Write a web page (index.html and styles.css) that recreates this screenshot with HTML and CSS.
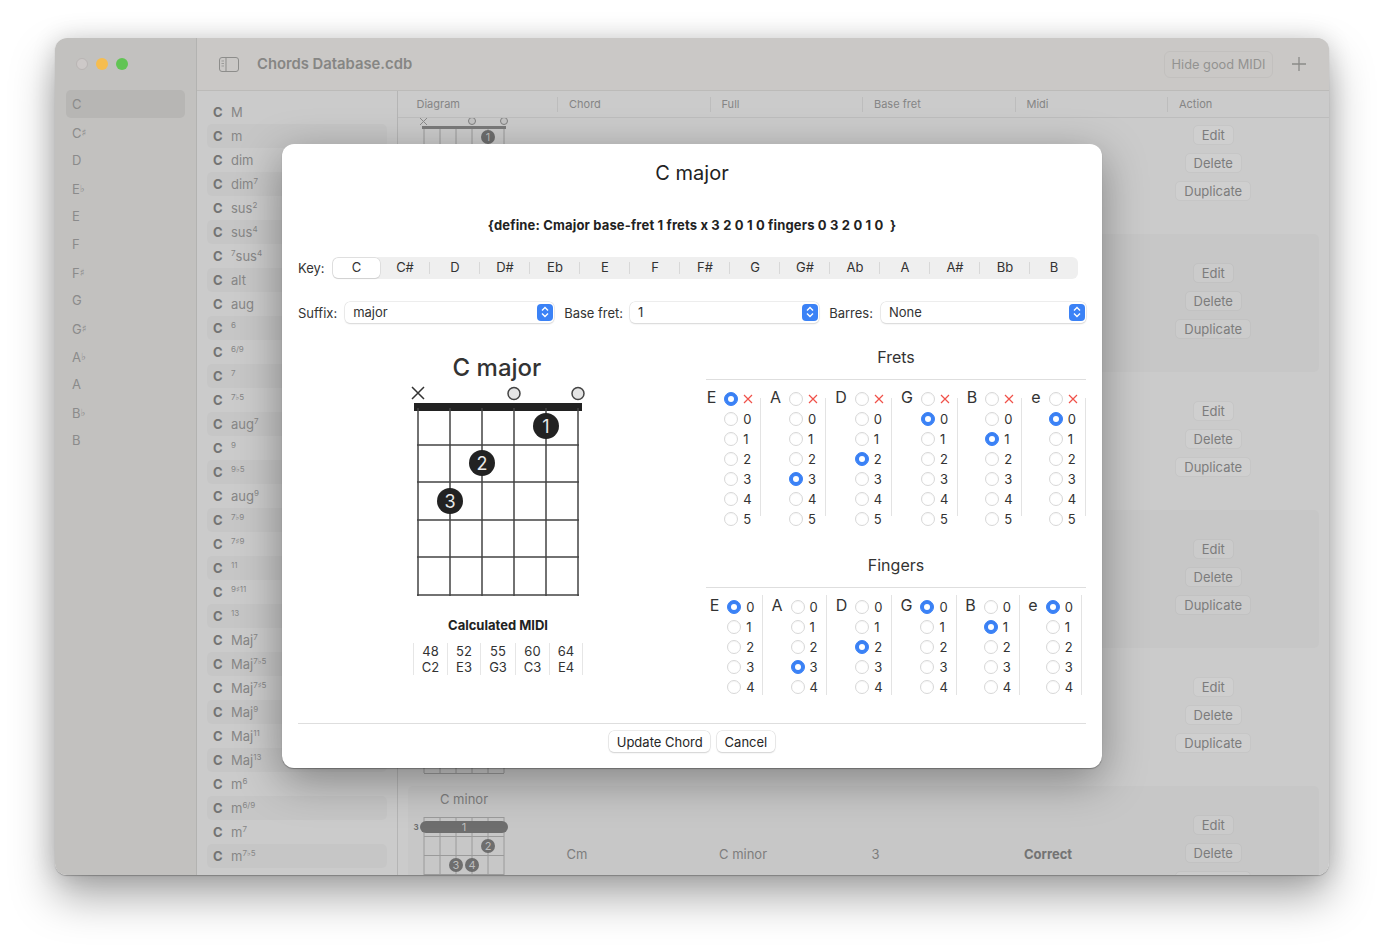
FILE: index.html
```html
<!DOCTYPE html>
<html lang="en">
<head>
    <meta charset="UTF-8">
    <meta name="viewport" content="width=device-width, initial-scale=1.0">
    <title>Chords Database.cdb</title>
    <link rel="stylesheet" href="styles.css">
</head>
<body>
    <div class="window">
        <div class="sidebar">
            <div class="lights"><span class="light grey"></span><span class="light yellow"></span><span class="light green"></span></div>
            <ul class="keys">
                <li class="active">C</li>
                <li>C<small>♯</small></li>
                <li>D</li>
                <li>E<small>♭</small></li>
                <li>E</li>
                <li>F</li>
                <li>F<small>♯</small></li>
                <li>G</li>
                <li>G<small>♯</small></li>
                <li>A<small>♭</small></li>
                <li>A</li>
                <li>B<small>♭</small></li>
                <li>B</li>
            </ul>
        </div>

        <div class="main">
            <div class="toolbar">
                <svg class="sidebar-icon" width="20" height="15" viewBox="0 0 20 15"><rect x="0.5" y="0.5" width="19" height="14" rx="2.5" fill="none" stroke="#8d8d8b"/><path d="M7 1v13" stroke="#8d8d8b"/><path d="M2.5 4h2.5M2.5 6.5h2.5M2.5 9h2.5" stroke="#9b9b99"/></svg>
                <h1>Chords Database.cdb</h1>
                <button class="hide-good">Hide good MIDI</button>
                <svg class="plus" width="14" height="14" viewBox="0 0 14 14"><path d="M7 0v14M0 7h14" stroke="#8a8a88" stroke-width="1.3"/></svg>
            </div>
            <div class="content">
                <ul class="suffixes">
                    <li><b>C</b>M</li>
                    <li><b>C</b>m</li>
                    <li><b>C</b>dim</li>
                    <li><b>C</b>dim<sup>7</sup></li>
                    <li><b>C</b>sus<sup>2</sup></li>
                    <li><b>C</b>sus<sup>4</sup></li>
                    <li><b>C</b><sup>7</sup>sus<sup>4</sup></li>
                    <li><b>C</b>alt</li>
                    <li><b>C</b>aug</li>
                    <li><b>C</b><sup>6</sup></li>
                    <li><b>C</b><sup>6/9</sup></li>
                    <li><b>C</b><sup>7</sup></li>
                    <li><b>C</b><sup>7♭5</sup></li>
                    <li><b>C</b>aug<sup>7</sup></li>
                    <li><b>C</b><sup>9</sup></li>
                    <li><b>C</b><sup>9♭5</sup></li>
                    <li><b>C</b>aug<sup>9</sup></li>
                    <li><b>C</b><sup>7♭9</sup></li>
                    <li><b>C</b><sup>7♯9</sup></li>
                    <li><b>C</b><sup>11</sup></li>
                    <li><b>C</b><sup>9♯11</sup></li>
                    <li><b>C</b><sup>13</sup></li>
                    <li><b>C</b>Maj<sup>7</sup></li>
                    <li><b>C</b>Maj<sup>7♭5</sup></li>
                    <li><b>C</b>Maj<sup>7♯5</sup></li>
                    <li><b>C</b>Maj<sup>9</sup></li>
                    <li><b>C</b>Maj<sup>11</sup></li>
                    <li><b>C</b>Maj<sup>13</sup></li>
                    <li><b>C</b>m<sup>6</sup></li>
                    <li><b>C</b>m<sup>6/9</sup></li>
                    <li><b>C</b>m<sup>7</sup></li>
                    <li><b>C</b>m<sup>7♭5</sup></li>
                </ul>

                <div class="table">
                    <div class="table-head">
                        <span>Diagram</span><span>Chord</span><span>Full</span><span>Base fret</span><span>Midi</span><span>Action</span>
                    </div>
                    <div class="table-rows">
                        <div class="row">
                            <div class="cell-diagram">
                                <svg width="152" height="138" viewBox="0 0 152 138">
                                    <path d="M12 22l7 7M19 22l-7 7" stroke="#8a8a8a"/>
                                    <circle cx="64" cy="25" r="3.5" fill="#c4c4c4" stroke="#7f7f7f"/>
                                    <circle cx="96" cy="25" r="3.5" fill="#c4c4c4" stroke="#7f7f7f"/>
                                    <rect x="14" y="30" width="84" height="3" fill="#7a7a7a"/>
                                    <path d="M16 33v105M32 33v105M48 33v105M64 33v105M80 33v105M96 33v105" stroke="#9a9a9a"/>
                                    <circle cx="80" cy="41" r="7" fill="#6e6e6e"/>
                                    <text x="80" y="45" text-anchor="middle" class="mini-dot">1</text>
                                </svg>
                            </div>
                            <div></div><div></div><div></div><div></div>
                            <div class="cell-action"><button>Edit</button><button>Delete</button><button>Duplicate</button></div>
                        </div>
                        <div class="row band">
                            <div></div><div></div><div></div><div></div><div></div>
                            <div class="cell-action"><button>Edit</button><button>Delete</button><button>Duplicate</button></div>
                        </div>
                        <div class="row">
                            <div></div><div></div><div></div><div></div><div></div>
                            <div class="cell-action"><button>Edit</button><button>Delete</button><button>Duplicate</button></div>
                        </div>
                        <div class="row band">
                            <div></div><div></div><div></div><div></div><div></div>
                            <div class="cell-action"><button>Edit</button><button>Delete</button><button>Duplicate</button></div>
                        </div>
                        <div class="row">
                            <div class="cell-diagram">
                                <svg width="152" height="138" viewBox="0 0 152 138">
                                    <path d="M16 100v25M32 100v25M48 100v25M64 100v25M80 100v25M96 100v25" stroke="#9a9a9a"/>
                                    <path d="M16 125.500h80M16 118.500h80" stroke="#9a9a9a"/>
                                </svg>
                            </div>
                            <div></div><div></div><div></div><div></div>
                            <div class="cell-action"><button>Edit</button><button>Delete</button><button>Duplicate</button></div>
                        </div>
                        <div class="row band">
                            <div class="cell-diagram">
                                <svg width="152" height="138" viewBox="0 0 152 138">
                                    <text x="56" y="18" text-anchor="middle" class="mini-title">C minor</text>
                                    <path d="M16 31v107M32 31v107M48 31v107M64 31v107M80 31v107M96 31v107" stroke="#9a9a9a"/>
                                    <path d="M16 31.500h80M16 50.500h80M16 69.500h80M16 88.500h80" stroke="#9a9a9a"/>
                                    <text x="8" y="44" text-anchor="middle" class="mini-fret">3</text>
                                    <rect x="12" y="35" width="88" height="12" rx="6" fill="#6e6e6e"/>
                                    <text x="56" y="45" text-anchor="middle" class="mini-dot">1</text>
                                    <circle cx="80" cy="60" r="7" fill="#6e6e6e"/>
                                    <text x="80" y="64" text-anchor="middle" class="mini-dot">2</text>
                                    <circle cx="48" cy="79" r="7" fill="#6e6e6e"/>
                                    <text x="48" y="83" text-anchor="middle" class="mini-dot">3</text>
                                    <circle cx="64" cy="79" r="7" fill="#6e6e6e"/>
                                    <text x="64" y="83" text-anchor="middle" class="mini-dot">4</text>
                                </svg>
                            </div>
                            <div class="cell-text">Cm</div>
                            <div class="cell-text">C minor</div>
                            <div class="cell-text">3</div>
                            <div class="cell-text correct">Correct</div>
                            <div class="cell-action"><button>Edit</button><button>Delete</button><button>Duplicate</button></div>
                        </div>
                    </div>
                </div>
            </div>
        </div>

        <div class="sheet">
            <h2 class="sheet-title">C major</h2>
            <p class="define">{define: Cmajor base-fret 1 frets x 3 2 0 1 0 fingers 0 3 2 0 1 0 &nbsp;}</p>

            <div class="key-row">
                <span class="field-label">Key:</span>
                <div class="segments">
                    <span class="segment selected">C</span>
                    <span class="segment">C#</span>
                    <span class="segment">D</span>
                    <span class="segment">D#</span>
                    <span class="segment">Eb</span>
                    <span class="segment">E</span>
                    <span class="segment">F</span>
                    <span class="segment">F#</span>
                    <span class="segment">G</span>
                    <span class="segment">G#</span>
                    <span class="segment">Ab</span>
                    <span class="segment">A</span>
                    <span class="segment">A#</span>
                    <span class="segment">Bb</span>
                    <span class="segment">B</span>
                </div>
            </div>

            <div class="select-row">
                <span class="field-label">Suffix:</span>
                <div class="select suffix-select">major<span class="stepper"><svg width="8" height="12" viewBox="0 0 8 12"><path d="M1 4.500l3-3 3 3M1 7.500l3 3 3-3" fill="none" stroke="#fff" stroke-width="1.400"/></svg></span></div>
                <span class="field-label">Base fret:</span>
                <div class="select fret-select">1<span class="stepper"><svg width="8" height="12" viewBox="0 0 8 12"><path d="M1 4.500l3-3 3 3M1 7.500l3 3 3-3" fill="none" stroke="#fff" stroke-width="1.400"/></svg></span></div>
                <span class="field-label">Barres:</span>
                <div class="select barre-select">None<span class="stepper"><svg width="8" height="12" viewBox="0 0 8 12"><path d="M1 4.500l3-3 3 3M1 7.500l3 3 3-3" fill="none" stroke="#fff" stroke-width="1.400"/></svg></span></div>
            </div>

            <div class="editor">
                <div class="preview">
                    <svg class="chord" width="200" height="260" viewBox="398 347 200 260">
                        <text x="497" y="376" text-anchor="middle" class="chord-title">C major</text>
                        <path d="M412 387l12 12M424 387l-12 12" stroke="#333" stroke-width="1.500"/>
                        <circle cx="514" cy="393.500" r="6" fill="#e4e4e4" stroke="#444" stroke-width="1.500"/>
                        <circle cx="578" cy="393.500" r="6" fill="#e4e4e4" stroke="#444" stroke-width="1.500"/>
                        <rect x="414" y="403" width="168" height="8" fill="#222"/>
                        <path d="M418 408v188M450 408v188M482 408v188M514 408v188M546 408v188M578 408v188" stroke="#444" stroke-width="1.500"/>
                        <path d="M417 445h162M417 482h162M417 520h162M417 557h162M417 595h162" stroke="#444" stroke-width="1.500"/>
                        <circle cx="546" cy="426" r="13" fill="#222"/>
                        <text x="546" y="433" text-anchor="middle" class="chord-dot">1</text>
                        <circle cx="482" cy="463" r="13" fill="#222"/>
                        <text x="482" y="470" text-anchor="middle" class="chord-dot">2</text>
                        <circle cx="450" cy="501" r="13" fill="#222"/>
                        <text x="450" y="508" text-anchor="middle" class="chord-dot">3</text>
                    </svg>
                    <h3 class="midi-title">Calculated MIDI</h3>
                    <div class="midi">
                        <div class="midi-note">48<br>C2</div>
                        <div class="midi-note">52<br>E3</div>
                        <div class="midi-note">55<br>G3</div>
                        <div class="midi-note">60<br>C3</div>
                        <div class="midi-note">64<br>E4</div>
                    </div>
                </div>

                <div class="pickers">
                    <h3 class="picker-title">Frets</h3>
                    <div class="strings frets">
                        <div class="string">
                            <span class="string-name">E</span>
                            <div class="options">
                                <div class="option"><span class="radio on"></span><svg class="mute" width="10" height="10" viewBox="0 0 10 10"><path d="M1 1l8 8M9 1l-8 8" stroke="#f0524a" stroke-width="1.200"/></svg></div>
                                <div class="option"><span class="radio"></span>0</div>
                                <div class="option"><span class="radio"></span>1</div>
                                <div class="option"><span class="radio"></span>2</div>
                                <div class="option"><span class="radio"></span>3</div>
                                <div class="option"><span class="radio"></span>4</div>
                                <div class="option"><span class="radio"></span>5</div>
                            </div>
                        </div>
                        <div class="string">
                            <span class="string-name">A</span>
                            <div class="options">
                                <div class="option"><span class="radio"></span><svg class="mute" width="10" height="10" viewBox="0 0 10 10"><path d="M1 1l8 8M9 1l-8 8" stroke="#f0524a" stroke-width="1.200"/></svg></div>
                                <div class="option"><span class="radio"></span>0</div>
                                <div class="option"><span class="radio"></span>1</div>
                                <div class="option"><span class="radio"></span>2</div>
                                <div class="option"><span class="radio on"></span>3</div>
                                <div class="option"><span class="radio"></span>4</div>
                                <div class="option"><span class="radio"></span>5</div>
                            </div>
                        </div>
                        <div class="string">
                            <span class="string-name">D</span>
                            <div class="options">
                                <div class="option"><span class="radio"></span><svg class="mute" width="10" height="10" viewBox="0 0 10 10"><path d="M1 1l8 8M9 1l-8 8" stroke="#f0524a" stroke-width="1.200"/></svg></div>
                                <div class="option"><span class="radio"></span>0</div>
                                <div class="option"><span class="radio"></span>1</div>
                                <div class="option"><span class="radio on"></span>2</div>
                                <div class="option"><span class="radio"></span>3</div>
                                <div class="option"><span class="radio"></span>4</div>
                                <div class="option"><span class="radio"></span>5</div>
                            </div>
                        </div>
                        <div class="string">
                            <span class="string-name">G</span>
                            <div class="options">
                                <div class="option"><span class="radio"></span><svg class="mute" width="10" height="10" viewBox="0 0 10 10"><path d="M1 1l8 8M9 1l-8 8" stroke="#f0524a" stroke-width="1.200"/></svg></div>
                                <div class="option"><span class="radio on"></span>0</div>
                                <div class="option"><span class="radio"></span>1</div>
                                <div class="option"><span class="radio"></span>2</div>
                                <div class="option"><span class="radio"></span>3</div>
                                <div class="option"><span class="radio"></span>4</div>
                                <div class="option"><span class="radio"></span>5</div>
                            </div>
                        </div>
                        <div class="string">
                            <span class="string-name">B</span>
                            <div class="options">
                                <div class="option"><span class="radio"></span><svg class="mute" width="10" height="10" viewBox="0 0 10 10"><path d="M1 1l8 8M9 1l-8 8" stroke="#f0524a" stroke-width="1.200"/></svg></div>
                                <div class="option"><span class="radio"></span>0</div>
                                <div class="option"><span class="radio on"></span>1</div>
                                <div class="option"><span class="radio"></span>2</div>
                                <div class="option"><span class="radio"></span>3</div>
                                <div class="option"><span class="radio"></span>4</div>
                                <div class="option"><span class="radio"></span>5</div>
                            </div>
                        </div>
                        <div class="string">
                            <span class="string-name">e</span>
                            <div class="options">
                                <div class="option"><span class="radio"></span><svg class="mute" width="10" height="10" viewBox="0 0 10 10"><path d="M1 1l8 8M9 1l-8 8" stroke="#f0524a" stroke-width="1.200"/></svg></div>
                                <div class="option"><span class="radio on"></span>0</div>
                                <div class="option"><span class="radio"></span>1</div>
                                <div class="option"><span class="radio"></span>2</div>
                                <div class="option"><span class="radio"></span>3</div>
                                <div class="option"><span class="radio"></span>4</div>
                                <div class="option"><span class="radio"></span>5</div>
                            </div>
                        </div>
                    </div>

                    <h3 class="picker-title fingers-title">Fingers</h3>
                    <div class="strings fingers">
                        <div class="string">
                            <span class="string-name">E</span>
                            <div class="options">
                                <div class="option"><span class="radio on"></span>0</div>
                                <div class="option"><span class="radio"></span>1</div>
                                <div class="option"><span class="radio"></span>2</div>
                                <div class="option"><span class="radio"></span>3</div>
                                <div class="option"><span class="radio"></span>4</div>
                            </div>
                        </div>
                        <div class="string">
                            <span class="string-name">A</span>
                            <div class="options">
                                <div class="option"><span class="radio"></span>0</div>
                                <div class="option"><span class="radio"></span>1</div>
                                <div class="option"><span class="radio"></span>2</div>
                                <div class="option"><span class="radio on"></span>3</div>
                                <div class="option"><span class="radio"></span>4</div>
                            </div>
                        </div>
                        <div class="string">
                            <span class="string-name">D</span>
                            <div class="options">
                                <div class="option"><span class="radio"></span>0</div>
                                <div class="option"><span class="radio"></span>1</div>
                                <div class="option"><span class="radio on"></span>2</div>
                                <div class="option"><span class="radio"></span>3</div>
                                <div class="option"><span class="radio"></span>4</div>
                            </div>
                        </div>
                        <div class="string">
                            <span class="string-name">G</span>
                            <div class="options">
                                <div class="option"><span class="radio on"></span>0</div>
                                <div class="option"><span class="radio"></span>1</div>
                                <div class="option"><span class="radio"></span>2</div>
                                <div class="option"><span class="radio"></span>3</div>
                                <div class="option"><span class="radio"></span>4</div>
                            </div>
                        </div>
                        <div class="string">
                            <span class="string-name">B</span>
                            <div class="options">
                                <div class="option"><span class="radio"></span>0</div>
                                <div class="option"><span class="radio on"></span>1</div>
                                <div class="option"><span class="radio"></span>2</div>
                                <div class="option"><span class="radio"></span>3</div>
                                <div class="option"><span class="radio"></span>4</div>
                            </div>
                        </div>
                        <div class="string">
                            <span class="string-name">e</span>
                            <div class="options">
                                <div class="option"><span class="radio on"></span>0</div>
                                <div class="option"><span class="radio"></span>1</div>
                                <div class="option"><span class="radio"></span>2</div>
                                <div class="option"><span class="radio"></span>3</div>
                                <div class="option"><span class="radio"></span>4</div>
                            </div>
                        </div>
                    </div>
                </div>
            </div>

            <div class="sheet-footer">
                <button class="sheet-button">Update Chord</button>
                <button class="sheet-button">Cancel</button>
            </div>
        </div>
    </div>
</body>
</html>
```

FILE: styles.css
```css
* {
    box-sizing: border-box;
}
body {
    font-family: 'Inter', 'DejaVu Sans', sans-serif;
    margin: 0;
    padding: 38px 55px 0;
    height: 949px;
    overflow: hidden;
    background-color: #ffffff;
    color: #222;
}
ul {
    list-style: none;
    margin: 0;
    padding: 0;
}
button {
    font-family: inherit;
}

/* dimmed window behind the sheet */
.window {
    position: relative;
    display: flex;
    width: 1274px;
    height: 837px;
    border-radius: 12px;
    box-shadow: 0 1px 1px rgba(0, 0, 0, 0.25), 0 22px 44px rgba(0, 0, 0, 0.34), 0 0 24px rgba(0, 0, 0, 0.14);
}
.sidebar {
    width: 142px;
    flex-shrink: 0;
    padding-top: 20px;
    background-color: #c2c1bf;
    border-right: 1px solid #b3b3b1;
    border-radius: 12px 0 0 12px;
}
.lights {
    display: flex;
    gap: 8px;
    padding-left: 21px;
    margin-bottom: 20px;
}
.light {
    width: 12px;
    height: 12px;
    border-radius: 50%;
}
.light.grey { background-color: #cdc9c8; border: 0.5px solid #b9b5b4; }
.light.yellow { background-color: #f6bd4f; }
.light.green { background-color: #61c454; }
.keys li {
    height: 28px;
    margin: 0 11px;
    padding-left: 6px;
    line-height: 28px;
    font-size: 13px;
    color: #8b8b8b;
    border-radius: 5px;
}
.keys li.active {
    background-color: #b7b6b4;
}
.keys small {
    font-size: 10px;
    vertical-align: 2px;
}

.main {
    flex-grow: 1;
    display: flex;
    flex-direction: column;
    min-width: 0;
    border-radius: 0 12px 12px 0;
    overflow: hidden;
    background-color: #cbcbcb;
}
.toolbar {
    height: 53px;
    flex-shrink: 0;
    display: flex;
    align-items: center;
    padding-left: 22px;
    background-color: #cac8c6;
    border-bottom: 1px solid #bcbbb9;
}
.toolbar h1 {
    margin: 0 0 1px 18px;
    font-size: 14.8px;
    font-weight: 600;
    color: #868684;
    flex-grow: 1;
}
.hide-good {
    width: 109px;
    height: 27px;
    margin-right: 19px;
    padding: 0;
    font-size: 12.8px;
    color: #939391;
    background-color: transparent;
    border: 1px solid #c2c0be;
    border-radius: 6px;
}
.plus {
    margin-right: 23px;
}

.content {
    flex-grow: 1;
    display: flex;
    min-height: 0;
}
.suffixes {
    width: 201px;
    flex-shrink: 0;
    padding: 9px 10px 0;
    border-right: 1px solid #b5b5b5;
    background-color: #cbcbcb;
}
.suffixes li {
    height: 24px;
    line-height: 24px;
    font-size: 13px;
    color: #868686;
    padding-left: 6px;
    border-radius: 5px;
    white-space: nowrap;
}
.suffixes li:nth-child(even) {
    background-color: #c6c6c6;
}
.suffixes b {
    display: inline-block;
    width: 18px;
    font-size: 13px;
    font-weight: 700;
    color: #737373;
}
.suffixes sup {
    font-size: 8px;
    line-height: 0;
    vertical-align: 5px;
}

.table {
    flex-grow: 1;
    min-width: 0;
    display: flex;
    flex-direction: column;
}
.table-head {
    height: 27px;
    flex-shrink: 0;
    display: grid;
    grid-template-columns: repeat(6, 152.5px);
    align-items: center;
    padding-left: 6.5px;
    font-size: 11px;
    color: #858585;
    border-bottom: 1px solid #bdbdbd;
}
.table-head span {
    padding-left: 11px;
    border-left: 1px solid #bdbdbd;
    line-height: 15px;
}
.table-head span:first-child {
    border-left: none;
    padding-left: 12px;
}
.table-rows {
    flex-grow: 1;
    min-height: 0;
    overflow: hidden;
    padding: 0 10px;
}
.row {
    height: 138px;
    display: grid;
    grid-template-columns: repeat(5, 152.5px) 1fr;
    align-items: center;
    border-radius: 5px;
}
.row:first-child {
    margin-top: -22px;
}
.row.band {
    background-color: #c7c7c7;
}
.cell-diagram {
    height: 138px;
}
.cell-diagram svg {
    display: block;
}
.cell-text {
    padding-left: 6px;
    padding-bottom: 3px;
    font-size: 13px;
    color: #7d7d7d;
}
.cell-text.correct {
    font-weight: 700;
    color: #737373;
}
.cell-action {
    display: flex;
    flex-direction: column;
    align-items: center;
    gap: 8px;
    padding-right: 63px;
    padding-bottom: 4px;
}
.cell-action button {
    height: 20px;
    padding: 0 8px;
    font-size: 13px;
    color: #7c7c7c;
    background-color: #cfcfcf;
    border: 1px solid #c6c6c6;
    border-radius: 5px;
}
.band .cell-action button {
    background-color: #cbcbcb;
    border-color: #c2c2c2;
}
.mini-title {
    font-size: 13px;
    fill: #7d7d7d;
}
.mini-fret {
    font-size: 8px;
    font-weight: 700;
    fill: #6e6e6e;
}
.mini-dot {
    font-size: 11px;
    fill: #bdbdbd;
}

/* sheet */
.sheet {
    position: absolute;
    left: 227px;
    top: 106px;
    width: 820px;
    height: 624px;
    padding: 15px 16px 0;
    background-color: #ffffff;
    border-radius: 12px;
    box-shadow: 0 1px 1px rgba(0, 0, 0, 0.3), 0 12px 44px rgba(0, 0, 0, 0.36);
    font-size: 13px;
    color: #262626;
}
.sheet-title {
    margin: 0;
    height: 28px;
    line-height: 28px;
    text-align: center;
    font-size: 20px;
    font-weight: 400;
    color: #222;
}
.define {
    margin: 30px 0 0;
    height: 16px;
    line-height: 16px;
    text-align: center;
    font-size: 13px;
    font-weight: 700;
    letter-spacing: 0.16px;
    color: #222;
}
.key-row {
    display: flex;
    align-items: center;
    margin-top: 24px;
    height: 22px;
}
.key-row .field-label {
    width: 34px;
}
.field-label {
    flex-shrink: 0;
    color: #333;
}
.segments {
    display: flex;
    align-items: center;
    width: 746px;
    height: 22px;
    padding: 0 0 0 1px;
    background-color: #efefef;
    border-radius: 6px;
}
.segment {
    width: 50px;
    height: 20px;
    line-height: 19px;
    text-align: center;
    color: #333;
}
.segment.selected {
    width: 47px;
    background-color: #ffffff;
    border-radius: 5px;
    box-shadow: 0 0 0 0.5px #d0d0d0, 0 1px 1px rgba(0, 0, 0, 0.12);
}
.segment:last-child {
    width: 48px;
}
.segment:not(.selected):not(:last-child) {
    background: linear-gradient(#d8d8d8, #d8d8d8) no-repeat right center / 1px 12px;
}
.select-row {
    display: flex;
    align-items: center;
    margin-top: 23px;
    height: 21px;
}
.select-row .field-label {
    padding-top: 1px;
}
.select {
    display: flex;
    align-items: center;
    justify-content: space-between;
    height: 21px;
    padding: 0 2px 1px 8px;
    color: #333;
    background-color: #ffffff;
    border-radius: 5px;
    box-shadow: 0 0 0 0.5px #dcdcdc, 0 1px 1.5px rgba(0, 0, 0, 0.16);
}
.suffix-select {
    width: 210px;
    margin: 0 10px 0 8px;
}
.fret-select {
    width: 190px;
    margin: 0 10px 0 7px;
}
.barre-select {
    width: 206px;
    margin-left: 8px;
}
.stepper {
    display: flex;
    align-items: center;
    justify-content: center;
    width: 16px;
    height: 17px;
    margin-right: -1px;
    background-color: #3b82f6;
    border-radius: 4px;
}

.editor {
    display: flex;
    margin-top: 24px;
    height: 376px;
}
.preview {
    width: 400px;
    display: flex;
    flex-direction: column;
    align-items: center;
    margin-right: 8px;
}
.chord {
    display: block;
}
.chord-title {
    font-size: 24px;
    font-weight: 500;
    fill: #333;
}
.chord-dot {
    font-size: 18px;
    fill: #e8e8e8;
}
.midi-title {
    margin: 10px 0 0;
    line-height: 16px;
    font-size: 13px;
    font-weight: 700;
    color: #222;
}
.midi {
    display: flex;
    margin-top: 10px;
}
.midi-note {
    width: 34px;
    line-height: 16px;
    text-align: center;
    color: #333;
    border-left: 1px solid #e6e6e6;
}
.midi-note:nth-child(2) {
    width: 33px;
}
.midi-note:nth-child(3) {
    width: 35px;
}
.midi-note:last-child {
    border-right: 1px solid #e6e6e6;
}

.pickers {
    width: 380px;
}
.picker-title {
    margin: 0;
    height: 33px;
    line-height: 20px;
    text-align: center;
    font-size: 16px;
    font-weight: 400;
    color: #333;
    border-bottom: 1px solid #dedede;
}
.fingers-title {
    margin-top: 26px;
}
.strings {
    display: grid;
    margin-top: 9px;
}
.strings.frets {
    grid-template-columns: 55px 65px 66px 66px 64px 64px;
}
.strings.fingers {
    grid-template-columns: 57px 64px 65px 65px 63px 62px;
    margin-top: 7px;
}
.string {
    display: flex;
    justify-content: center;
    gap: 8px;
}
.frets .string {
    background: linear-gradient(#e3e3e3, #e3e3e3) no-repeat right 9px / 1px 118px;
}
.frets .string:first-child {
    padding-right: 8px;
}
.fingers .string {
    padding-top: 2px;
    background: linear-gradient(#e3e3e3, #e3e3e3) no-repeat right top / 1px 100px;
}
.fingers .string:first-child {
    padding-right: 4px;
}
.string-name {
    font-size: 16px;
    line-height: 17px;
    color: #333;
}
.option {
    display: flex;
    align-items: center;
    gap: 5px;
    width: 28px;
    height: 20px;
    color: #333;
}
.mute {
    flex-shrink: 0;
}
.radio {
    display: flex;
    align-items: center;
    justify-content: center;
    flex-shrink: 0;
    width: 14px;
    height: 14px;
    border-radius: 50%;
    background-color: #fff;
    border: 1px solid #d8d8d8;
    box-shadow: inset 0 1px 1px rgba(0, 0, 0, 0.04);
}
.radio.on {
    background-color: #3b82f6;
    border-color: #3b82f6;
}
.radio.on::after {
    content: '';
    width: 6px;
    height: 6px;
    border-radius: 50%;
    background-color: #fff;
}

.sheet-footer {
    display: flex;
    justify-content: center;
    gap: 7px;
    padding-top: 7px;
    border-top: 1px solid #dedede;
}
.sheet-button {
    height: 21px;
    padding: 0 7.5px;
    font-size: 13px;
    color: #262626;
    background-color: #fff;
    border: none;
    border-radius: 5px;
    box-shadow: 0 0 0 0.5px #d8d8d8, 0 1px 1.5px rgba(0, 0, 0, 0.18);
}
```
